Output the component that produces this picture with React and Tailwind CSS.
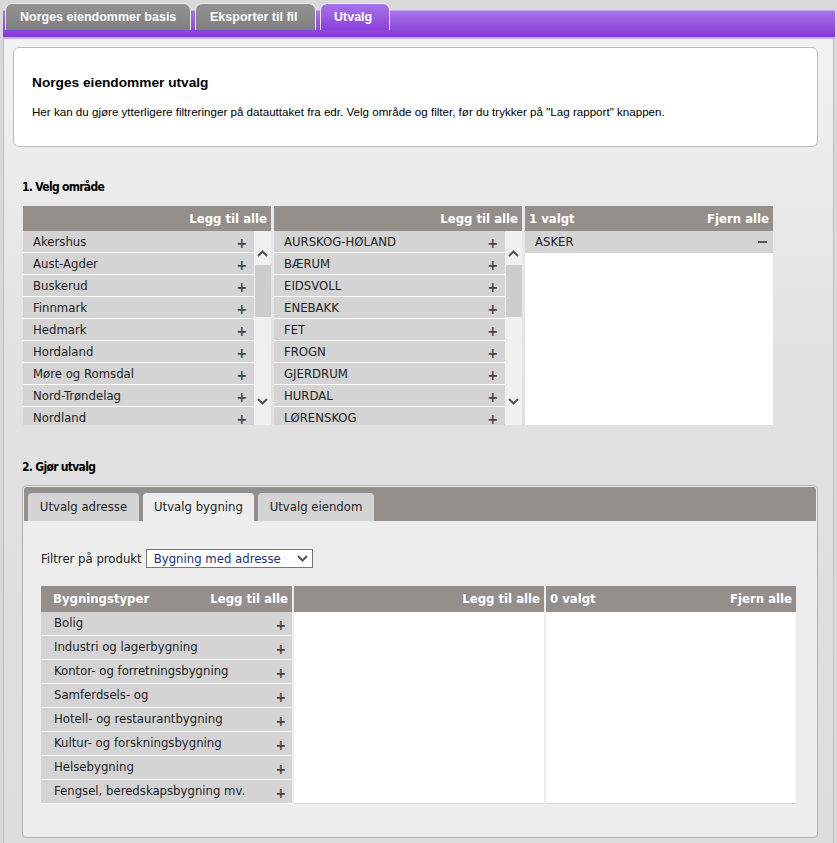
import React from "react";

const fylker = [
  "Akershus",
  "Aust-Agder",
  "Buskerud",
  "Finnmark",
  "Hedmark",
  "Hordaland",
  "Møre og Romsdal",
  "Nord-Trøndelag",
  "Nordland",
];

const kommuner = [
  "AURSKOG-HØLAND",
  "BÆRUM",
  "EIDSVOLL",
  "ENEBAKK",
  "FET",
  "FROGN",
  "GJERDRUM",
  "HURDAL",
  "LØRENSKOG",
];

const bygningstyper = [
  "Bolig",
  "Industri og lagerbygning",
  "Kontor- og forretningsbygning",
  "Samferdsels- og",
  "Hotell- og restaurantbygning",
  "Kultur- og forskningsbygning",
  "Helsebygning",
  "Fengsel, beredskapsbygning mv.",
];

const tahoma = "font-['DejaVu_Sans_Condensed','DejaVu_Sans',sans-serif]";
const arial = "font-['Liberation_Sans',Arial,sans-serif]";

const Chevron = ({ up }) => (
  <svg width="11" height="7" viewBox="0 0 11 7">
    <path
      d={up ? "M1 6 L5.5 1.5 L10 6" : "M1 1 L5.5 5.5 L10 1"}
      fill="none"
      stroke="#555"
      strokeWidth="2"
    />
  </svg>
);

const Plus = () => (
  <span className="mt-[3px] text-[14px] font-bold leading-none text-[#444]">+</span>
);

// liste med rullefelt (velg område)
const ScrollList = ({ items }) => (
  <div className="flex h-[194px] overflow-hidden">
    <div className="flex w-[231px] flex-col">
      {items.map((item) => (
        <div
          key={item}
          className="flex h-[22px] shrink-0 items-center justify-between border-b border-white bg-[#d4d4d4] pl-[10px] pr-[7px] text-[13px] text-[#222]"
        >
          <span>{item}</span>
          <Plus />
        </div>
      ))}
    </div>
    <div className="flex w-[17px] flex-col items-center bg-[#f0f0f0]">
      <div className="mt-[19px]">
        <Chevron up />
      </div>
      <div className="mt-[8px] h-[52px] w-[16px] bg-[#cdcdcd]" />
      <div className="mt-auto mb-[20px]">
        <Chevron />
      </div>
    </div>
  </div>
);

const HeaderCell = ({ left, right, className = "" }) => (
  <div
    className={`flex items-center justify-between bg-[#958f8b] px-[4px] text-[13px] font-bold text-white ${className}`}
  >
    <span>{left}</span>
    <span>{right}</span>
  </div>
);

export default function App() {
  return (
    <div className={`h-[843px] w-[837px] overflow-hidden bg-[#d9d9d9] ${arial}`}>
      {/* faner øverst */}
      <div className="relative h-[39px]">
        <div className="absolute left-[3px] right-[2px] top-[10px] h-[27px] border-t border-[#c9a9f2] bg-gradient-to-b from-[#a673e8] to-[#8537d6]" />
        <div className="absolute left-[3px] right-[2px] top-[37px] h-[2px] bg-[#c6aee6]" />
        <div className="relative flex gap-[4px] pl-[5px] pt-[3px]">
          <div className="flex h-[27px] w-[186px] items-center rounded-t-[7px] border border-b-0 border-[#eaeaea] bg-gradient-to-b from-[#939393] to-[#7f7f7f] pl-[14px] text-[12.5px] font-bold text-white">
            Norges eiendommer basis
          </div>
          <div className="flex h-[27px] w-[121px] items-center rounded-t-[7px] border border-b-0 border-[#eaeaea] bg-gradient-to-b from-[#939393] to-[#7f7f7f] pl-[14px] text-[12.5px] font-bold text-white">
            Eksporter til fil
          </div>
          <div className="flex h-[27px] w-[70px] items-center rounded-t-[7px] border border-b-0 border-[#efe6fb] bg-gradient-to-b from-[#a673e8] to-[#8b3edb] pl-[13px] text-[12.5px] font-bold text-white">
            Utvalg
          </div>
        </div>
      </div>

      {/* innhold */}
      <div className="ml-[3px] h-[804px] w-[831px] border-x border-[#bdbdbd] bg-gradient-to-b from-[#f2f2f2] via-[#e2e2e2] via-40% to-[#dcdcdc] pt-[8px]">
        <div className="ml-[9px] h-[100px] w-[805px] rounded-[6px] border border-[#bdbdbd] bg-white px-[18px] pt-[26px]">
          <div className="text-[13.7px] font-bold leading-[18px] text-black">Norges eiendommer utvalg</div>
          <div className="mt-[12px] text-[11.6px] leading-[16px] text-black">
            Her kan du gjøre ytterligere filtreringer på datauttaket fra edr. Velg område og filter, før du trykker på "Lag rapport" knappen.
          </div>
        </div>

        <div className={`ml-[18px] mt-[32px] text-[12px] font-bold leading-[16px] tracking-[-0.7px] text-black ${tahoma}`}>1. Velg område</div>

        <div className={`ml-[19px] mt-[11px] flex w-[750px] gap-[3px] ${tahoma}`}>
          <div className="flex w-[248px] flex-col">
            <HeaderCell right="Legg til alle" className="h-[25px]" />
            <ScrollList items={fylker} />
          </div>
          <div className="flex w-[248px] flex-col">
            <HeaderCell right="Legg til alle" className="h-[25px]" />
            <ScrollList items={kommuner} />
          </div>
          <div className="flex w-[249px] flex-col">
            <HeaderCell left="1 valgt" right="Fjern alle" className="h-[25px]" />
            <div className="h-[194px] bg-white">
              <div className="flex h-[22px] items-center justify-between bg-[#d4d4d4] pl-[10px] pr-[6px] text-[13px] text-[#222]">
                <span>ASKER</span>
                <span className="h-[2px] w-[9px] bg-[#555]" />
              </div>
            </div>
          </div>
        </div>

        <div className={`ml-[18px] mt-[34px] text-[12px] font-bold leading-[16px] tracking-[-0.7px] text-black ${tahoma}`}>2. Gjør utvalg</div>

        <div className={`ml-[18px] mt-[10px] h-[353px] w-[796px] rounded-[4px] border border-[#b3b3b3] bg-[#ededed] p-[1px] ${tahoma}`}>
          <div className="flex h-[34px] items-end gap-[4px] rounded-t-[3px] bg-[#958f8b] pl-[4px]">
            <div className="flex h-[28px] w-[111px] items-center justify-center rounded-t-[4px] bg-[#d4d4d4] text-[13px] text-[#222]">
              Utvalg adresse
            </div>
            <div className="flex h-[28px] w-[111px] items-center justify-center rounded-t-[4px] bg-[#ededed] text-[13px] text-[#222]">
              Utvalg bygning
            </div>
            <div className="flex h-[28px] w-[116px] items-center justify-center rounded-t-[4px] bg-[#d4d4d4] text-[13px] text-[#222]">
              Utvalg eiendom
            </div>
          </div>

          <div className="ml-[17px] mt-[28px] flex items-center gap-[4px] text-[13px] text-[#222]">
            <span>Filtrer på produkt</span>
            <div className="flex h-[19px] w-[167px] items-center justify-between border border-[#777] bg-white pl-[7px] pr-[4px] text-[#1b2f7a]">
              <span>Bygning med adresse</span>
              <Chevron />
            </div>
          </div>

          <div className="ml-[17px] mt-[17px] flex w-[755px] gap-[2px]">
            <div className="flex w-[251px] flex-col">
              <HeaderCell left={<span className="pl-[8px]">Bygningstyper</span>} right="Legg til alle" className="h-[26px]" />
              {bygningstyper.map((b) => (
                <div
                  key={b}
                  className="flex h-[24px] items-center justify-between border-b border-white bg-[#d4d4d4] pl-[13px] pr-[6px] text-[13px] text-[#222]"
                >
                  <span>{b}</span>
                  <Plus />
                </div>
              ))}
            </div>
            <div className="flex w-[250px] flex-col">
              <HeaderCell right="Legg til alle" className="h-[26px]" />
              <div className="h-[192px] border-b border-[#d6d6d6] bg-white" />
            </div>
            <div className="flex w-[250px] flex-col">
              <HeaderCell left="0 valgt" right="Fjern alle" className="h-[26px]" />
              <div className="h-[192px] border-b border-[#d6d6d6] bg-white" />
            </div>
          </div>
        </div>
      </div>
    </div>
  );
}
